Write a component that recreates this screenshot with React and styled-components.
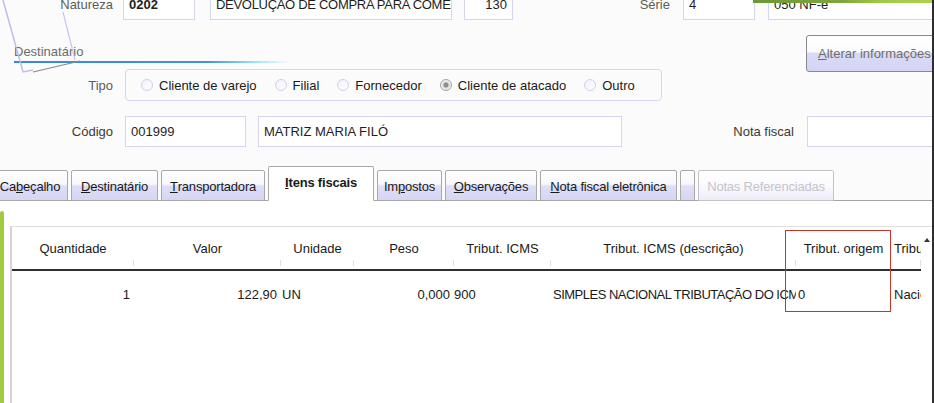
import React from 'react';
import styled, { createGlobalStyle, css } from 'styled-components';

const GlobalStyle = createGlobalStyle`
  html, body {
    margin: 0;
    padding: 0;
    background: #fbfbfb;
  }
  body {
    font-family: 'Liberation Sans', Arial, sans-serif;
    font-size: 13px;
    color: #1a1a1a;
  }
`;

const Page = styled.div`
  position: relative;
  width: 932px;
  height: 403px;
  overflow: hidden;
  border-right: 2px solid #2e2e2e;
  background: #fbfbfb;
  display: flex;
  flex-direction: column;
`;

/* decoration / annotation overlays */
const Corner = styled.svg`
  position: absolute;
  left: 0;
  top: 0;
  pointer-events: none;
`;

const GreenTop = styled.div`
  position: absolute;
  top: 0;
  left: 753px;
  width: 181px;
  height: 3px;
  background: linear-gradient(to right, #6d9736 0%, #7fa83c 50%, #9fca45 70%, #aed14f 100%);
`;

const RedMark = styled.div`
  position: absolute;
  left: 785px;
  top: 230px;
  width: 104px;
  height: 80px;
  border: 1.5px solid #c9332c;
  pointer-events: none;
`;

/* form rows */
const Row = styled.div`
  display: flex;
  align-items: center;
  flex-shrink: 0;
  height: ${p => p.$h}px;
  margin-top: ${p => p.$mt || 0}px;
`;

const Label = styled.div`
  flex-shrink: 0;
  width: ${p => p.$w}px;
  margin-left: ${p => p.$ml || 0}px;
  text-align: right;
  color: ${p => p.$dark ? '#3a3a30' : '#5c5c5c'};
  white-space: nowrap;
`;

const Input = styled.div`
  flex-shrink: 0;
  box-sizing: border-box;
  height: ${p => p.$h || 31}px;
  width: ${p => p.$w}px;
  margin-left: ${p => p.$ml}px;
  border: 1px solid #d5d5f1;
  background: #fff;
  display: flex;
  align-items: center;
  padding: 0 5px;
  white-space: nowrap;
  overflow: hidden;
  justify-content: ${p => p.$right ? 'flex-end' : 'flex-start'};
  font-weight: ${p => p.$bold ? 'bold' : 'normal'};
  letter-spacing: ${p => p.$tight ? '-0.3px' : 'normal'};
  color: #1e1e1e;
`;

const SectionTitle = styled.div`
  display: flex;
  flex-direction: column;
  padding-left: 14px;
  padding-top: 3px;
  color: #6b6b6b;
  line-height: 16px;
`;

const TitleRule = styled.div`
  margin-top: 1px;
  width: 276px;
  height: 2px;
  background: linear-gradient(to right, #3a86e0 0%, #3f91e6 70%, #9fe6f6 88%, rgba(200, 245, 250, 0) 100%);
`;

const AlterButton = styled.div`
  margin-left: auto;
  align-self: flex-start;
  box-sizing: border-box;
  width: 140px;
  flex-shrink: 0;
  height: 37px;
  margin-right: -14px;
  border: 1px solid #8a8a8a;
  border-radius: 3px;
  background: linear-gradient(#ffffff 0%, #fbfbfd 45%, #d9d9f7 50%, #d4d4f5 100%);
  display: flex;
  align-items: center;
  padding-left: 11px;
  color: #6e6e6e;
  white-space: nowrap;
  overflow: hidden;
`;

const GroupBox = styled.div`
  box-sizing: border-box;
  width: 537px;
  height: 32px;
  margin-left: 12px;
  border: 1px solid #d6d6f2;
  border-radius: 4px;
  display: flex;
  align-items: center;
  padding-left: 15px;
  gap: 18px;
`;

const RadioItem = styled.div`
  display: flex;
  align-items: center;
  gap: 6px;
  white-space: nowrap;
  color: #1a1a1a;
`;

const RadioDot = styled.span`
  box-sizing: border-box;
  width: 12px;
  height: 12px;
  border-radius: 50%;
  border: 1px solid ${p => p.$on ? '#a3a3a3' : '#cfcff0'};
  background: ${p => p.$on ? 'radial-gradient(circle, #8c8c8c 0 2px, #dcdcdc 3px, #f4f4f4 5px)' : 'linear-gradient(135deg, #f0f0fb, #ffffff)'};
`;

/* tabs */
const TabBar = styled.div`
  display: flex;
  align-items: flex-end;
  gap: 3px;
  height: 35px;
  margin-top: 18px;
  flex-shrink: 0;
  border-bottom: 1px solid #a4a4a4;
`;

const Tab = styled.div`
  box-sizing: border-box;
  flex-shrink: 0;
  width: ${p => p.$w}px;
  height: 31px;
  margin-bottom: -1px;
  border: 1px solid #a9a9a9;
  border-radius: 2px 2px 0 0;
  background: linear-gradient(#ffffff 0%, #f8f8fc 45%, #dedef7 52%, #d6d6f4 100%);
  display: flex;
  align-items: center;
  justify-content: center;
  padding-top: 2px;
  white-space: nowrap;
  overflow: hidden;
  letter-spacing: -0.2px;
  color: #1a1a1a;
  ${p => p.$first && css`margin-left: -8px;`}
  ${p => p.$active && css`
    height: 35px;
    background: #fff;
    border-bottom: 1px solid #fff;
    font-weight: bold;
    padding-top: 0;
    padding-bottom: 3px;
  `}
  ${p => p.$disabled && css`
    color: #c4c4cc;
    background: linear-gradient(#ffffff 0%, #fafafd 50%, #ececf9 100%);
    border-color: #c4c4c4;
  `}
`;

const Key = styled.span`
  text-decoration: underline;
`;

/* grid */
const Body = styled.div`
  flex: 1;
  display: flex;
  background: #fff;
`;

const GreenEdge = styled.div`
  width: 4px;
  margin-top: 10px;
  border-radius: 3px 3px 0 0;
  background: #9fcb3f;
`;

const Grid = styled.div`
  flex: 1;
  margin: 25px 0 0 6px;
  border-top: 1px solid #dedede;
  border-left: 2px solid #d4d4d4;
  background: #fff;
  display: flex;
  flex-direction: column;
`;

const HeaderWrap = styled.div`
  display: flex;
`;

const HeaderRow = styled.div`
  display: flex;
  height: 42px;
  border-bottom: 2px solid #2f2f2f;
  width: 909px;
  flex-shrink: 0;
`;

const DataRow = styled.div`
  display: flex;
  height: 46px;
  width: 909px;
`;

const HeadCell = styled.div`
  position: relative;
  box-sizing: border-box;
  flex-shrink: 0;
  width: ${p => p.$w}px;
  display: flex;
  align-items: center;
  justify-content: ${p => p.$left ? 'flex-start' : 'center'};
  padding-left: ${p => p.$left ? 3 : 0}px;
  white-space: nowrap;
  overflow: hidden;
  color: #1a1a1a;
  &::after {
    content: '';
    position: absolute;
    right: 0;
    bottom: 3px;
    width: 1px;
    height: 6px;
    background: #d6e0f2;
  }
`;

const Cell = styled.div`
  box-sizing: border-box;
  flex-shrink: 0;
  width: ${p => p.$w}px;
  display: flex;
  align-items: center;
  justify-content: ${p => p.$right ? 'flex-end' : 'flex-start'};
  padding: 0 ${p => p.$right ? 4 : 0}px 0 ${p => p.$pl || 0}px;
  white-space: nowrap;
  overflow: hidden;
  letter-spacing: ${p => p.$tight ? '-0.5px' : 'normal'};
  color: #1a1a1a;
`;

const ScrollCap = styled.div`
  position: relative;
  flex: 1;
  &::before {
    content: '';
    position: absolute;
    right: 2px;
    top: 11px;
    border-left: 3px solid transparent;
    border-right: 3px solid transparent;
    border-bottom: 4px solid #333;
  }
`;

const columns = [
  { w: 122, head: 'Quantidade', value: '1', right: true },
  { w: 147, head: 'Valor', value: '122,90', right: true },
  { w: 73, head: 'Unidade', value: 'UN', pl: 1 },
  { w: 100, head: 'Peso', value: '0,000', right: true },
  { w: 97, head: 'Tribut. ICMS', value: '900' },
  { w: 245, head: 'Tribut. ICMS (descrição)', value: 'SIMPLES NACIONAL TRIBUTAÇÃO DO ICMS', pl: 2, tight: true },
  { w: 95, head: 'Tribut. origem', value: '0', pl: 2 },
  { w: 30, head: 'Tributação', value: 'Nacional', pl: 3, left: true },
];

const radios = [
  ['Cliente de varejo', false],
  ['Filial', false],
  ['Fornecedor', false],
  ['Cliente de atacado', true],
  ['Outro', false],
];

export default function App() {
  return (
    <>
      <GlobalStyle />
      <Page>
        <Row $h={30} $mt={-11}>
          <Label $w={113}>Natureza</Label>
          <Input $w={72} $ml={10} $h={31} $bold>0202</Input>
          <Input $w={242} $ml={15} $h={31} $tight>DEVOLUÇÃO DE COMPRA PARA COMERCIALIZAÇÃO</Input>
          <Input $w={49} $ml={12} $h={31} $right>130</Input>
          <Label $w={157}>Série</Label>
          <Input $w={72} $ml={13} $h={31}>4</Input>
          <Input $w={170} $ml={13} $h={31}>050 NF-e</Input>
        </Row>

        <Row $h={34} $mt={16}>
          <SectionTitle>
            Destinatário
            <TitleRule />
          </SectionTitle>
          <AlterButton><span><Key>A</Key>lterar informações</span></AlterButton>
        </Row>

        <Row $h={32}>
          <Label $w={113}>Tipo</Label>
          <GroupBox>
            {radios.map(([text, on]) => (
              <RadioItem key={text}>
                <RadioDot $on={on} />
                {text}
              </RadioItem>
            ))}
          </GroupBox>
        </Row>

        <Row $h={31} $mt={15}>
          <Label $w={113} $dark>Código</Label>
          <Input $w={121} $ml={12}>001999</Input>
          <Input $w={364} $ml={12}>MATRIZ MARIA FILÓ</Input>
          <Label $w={172} $dark>Nota fiscal</Label>
          <Input $w={130} $ml={13} />
        </Row>

        <TabBar>
          <Tab $w={76} $first>Ca<Key>b</Key>eçalho</Tab>
          <Tab $w={87}><Key>D</Key>estinatário</Tab>
          <Tab $w={104}><Key>T</Key>ransportadora</Tab>
          <Tab $w={106} $active><Key>I</Key>tens fiscais</Tab>
          <Tab $w={65}>Im<Key>p</Key>ostos</Tab>
          <Tab $w={92}><Key>O</Key>bservações</Tab>
          <Tab $w={137}><Key>N</Key>ota fiscal eletrônica</Tab>
          <Tab $w={15} />
          <Tab $w={136} $disabled>Notas Referenciadas</Tab>
        </TabBar>

        <Body>
          <GreenEdge />
          <Grid>
            <HeaderWrap>
              <HeaderRow>
                {columns.map(c => (
                  <HeadCell key={c.head} $w={c.w} $left={c.left}>{c.head}</HeadCell>
                ))}
              </HeaderRow>
              <ScrollCap />
            </HeaderWrap>
            <DataRow>
              {columns.map(c => (
                <Cell key={c.head} $w={c.w} $right={c.right} $pl={c.pl} $tight={c.tight}>{c.value}</Cell>
              ))}
            </DataRow>
          </Grid>
        </Body>

        <Corner width="100" height="80" viewBox="0 0 100 80">
          <polyline points="3,0 23,72 33,70" fill="none" stroke="#bcbcf0" strokeWidth="1.5" />
          <polyline points="63,12 75,60" fill="none" stroke="#c4c4f2" strokeWidth="1.2" />
          <line x1="33" y1="72" x2="80" y2="61" stroke="#8a8a8a" strokeWidth="1.2" />
        </Corner>
        <GreenTop />
        <RedMark />
      </Page>
    </>
  );
}
